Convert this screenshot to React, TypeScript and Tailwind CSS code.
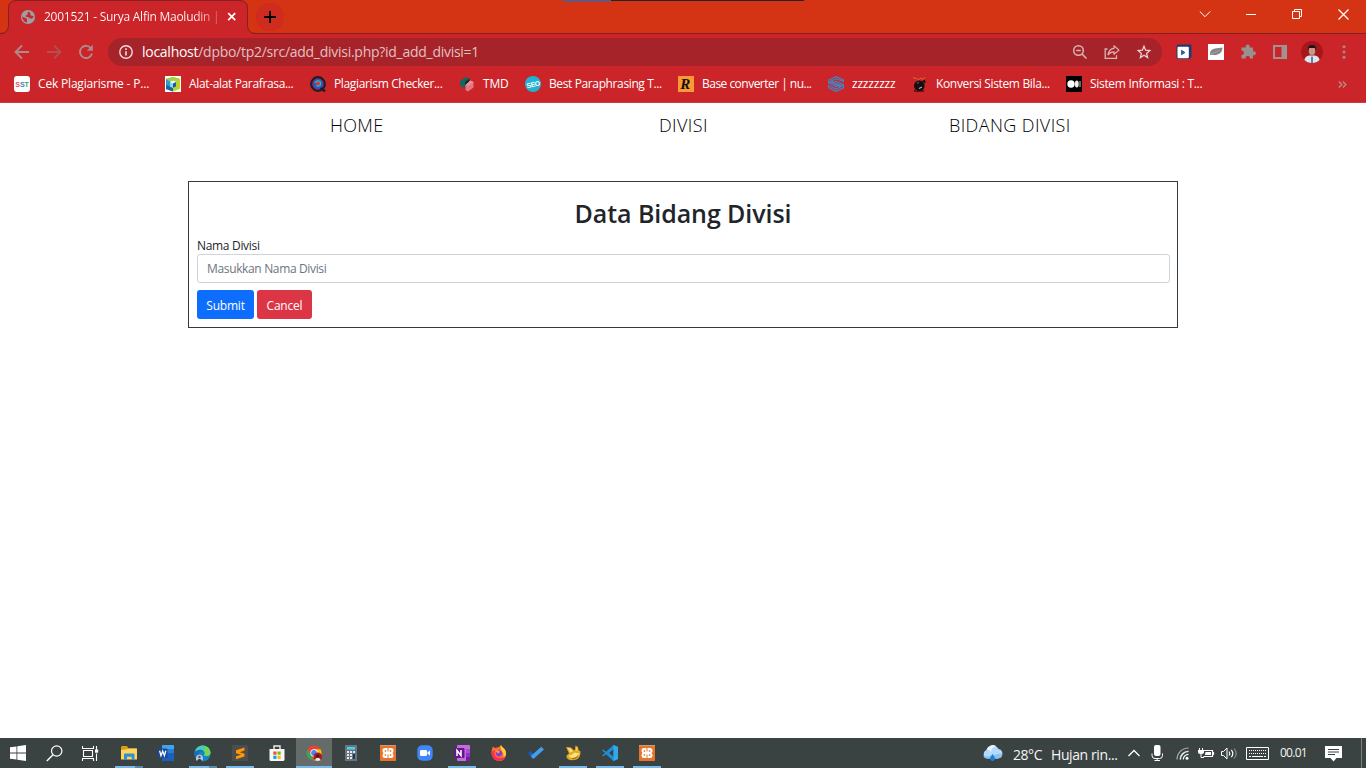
import type { ReactNode } from "react";

type IconProps = { children: ReactNode; s?: number; vb?: string };

function Svg({ children, s = 16, vb }: IconProps) {
  return (
    <svg width={s} height={s} viewBox={vb ?? `0 0 ${s} ${s}`} fill="none" className="block shrink-0">
      {children}
    </svg>
  );
}

/* ---------- bookmark favicons ---------- */
const Sst = () => (
  <Svg>
    <rect width="16" height="16" rx="3" fill="#fff" />
    <text x="1.3" y="10.8" fontSize="7.6" fontWeight="700" fontFamily="Liberation Sans" textLength="13.5" lengthAdjust="spacingAndGlyphs">
      <tspan fill="#e2574c">S</tspan>
      <tspan fill="#3b86c8">S</tspan>
      <tspan fill="#3aa76d">T</tspan>
    </text>
  </Svg>
);
const Cube = () => (
  <Svg>
    <rect width="16" height="16" fill="#fff" />
    <path d="M1 3l7-2v4L5 6v4.500l3 1.500v3.500L1 13z" fill="#2a9fce" />
    <path d="M1 9l4 1.500 3 1.500v3.500L1 13z" fill="#1668a8" />
    <path d="M8 1l7 2v10l-7 2.500V12l3-1.500V6L8 5z" fill="#b9d42c" />
    <path d="M1 3l7-2 7 2-4 2.500L8 4.500l-3 1z" fill="#a9cf3b" />
    <path d="M8 4.500l3 1.200L8 7.500 5 5.700z" fill="#f4fbff" />
    <path d="M5 6l3 1.500V12l-3-1.500z" fill="#8fd0ec" />
    <path d="M8 7.500L11 6v4.500L8 12z" fill="#1b5f8f" />
  </Svg>
);
const Checker = () => (
  <Svg>
    <circle cx="8" cy="8" r="6.800" stroke="#17202d" strokeWidth="2.200" />
    <path d="M10 11l5 4.500" stroke="#17202d" strokeWidth="2.400" />
    <circle cx="8" cy="8" r="4.900" fill="#2354d8" />
    <circle cx="8" cy="7.500" r="2.600" fill="#df3434" stroke="#35b2ad" strokeWidth="1.200" />
    <path d="M5.500 7v5" stroke="#2354d8" strokeWidth="1.500" />
  </Svg>
);
const Tmd = () => (
  <Svg>
    <path d="M1 5l6-4 3.500 1.500L6 6v6.500L1 9.500z" fill="#11695d" />
    <path d="M6 6l4.500-3.500v4L6 9.500z" fill="#0c2e30" />
    <path d="M6.500 9l5-4.500L14.500 6v5.500L9 15.500 6.500 14z" fill="#e87583" />
    <path d="M11.500 4.500L14.500 6 9 10l-2.500-1z" fill="#ef8f9b" />
  </Svg>
);
const Seo = () => (
  <Svg>
    <circle cx="8" cy="8" r="8" fill="#22b2d3" />
    <text x="1.300" y="10.900" fontSize="7" fontWeight="700" fill="#fff" fontFamily="Liberation Sans" textLength="13.500" lengthAdjust="spacingAndGlyphs" transform="rotate(-12 8 8)">
      SEO
    </text>
  </Svg>
);
const RLetter = () => (
  <Svg>
    <rect width="16" height="16" fill="#fb9a32" />
    <text x="2.200" y="13.300" fontSize="15" fontWeight="700" fontStyle="italic" fill="#111" fontFamily="Liberation Serif">
      R
    </text>
  </Svg>
);
const Zed = () => (
  <Svg>
    <path d="M15.500 4L8 .7.700 4v3.200L8 10.500l4.300-1.900M.700 11.800L8 15.300l7.500-3.500V8.700L8 5.300 3.800 7.200M15.500 4v1.500L8 2.800 3 5l12.300 5.500M.700 11.800v-2L8 13l4.700-2.200L.700 5.500" stroke="#3c89d0" strokeWidth="1.150" />
  </Svg>
);
const Bomb = () => (
  <Svg>
    <path d="M2 14.500q5 2.500 10 0" stroke="#5a1518" strokeWidth="1.500" />
    <ellipse cx="7.300" cy="9.800" rx="5.300" ry="5.300" fill="#130f10" />
    <path d="M10.500 5.500l2-.8.300 2.500" stroke="#130f10" strokeWidth="1.500" />
    <path d="M1 1.700l3.500.8L6.500 3.500 9 2l2 1.500L13 1" stroke="#e0692d" />
    <path d="M7 12.500l3-1.500" stroke="#b5b5b5" strokeWidth="1.100" />
    <path d="M5 7.200l2-.7" stroke="#777" />
  </Svg>
);
const Medium = () => (
  <Svg>
    <rect width="16" height="16" fill="#000" />
    <circle cx="5" cy="8" r="3.700" fill="#fff" />
    <ellipse cx="10.800" cy="8" rx="1.900" ry="3.500" fill="#eee" />
    <path d="M14 5v6" stroke="#ccc" />
  </Svg>
);

/* ---------- taskbar app icons ---------- */
const Windows = () => (
  <Svg>
    <path d="M0 2.300l6.500-.9v6.200H0zM7.300 1.300L16 0v7.600H7.300zM0 8.400h6.500v6.200L0 13.700zM7.300 8.400H16V16l-8.700-1.300z" fill="#fff" />
  </Svg>
);
const Search = () => (
  <Svg s={17}>
    <circle cx="10.700" cy="6" r="5.200" stroke="#fff" strokeWidth="1.200" />
    <path d="M7 9.700L.8 16" stroke="#fff" strokeWidth="1.400" />
  </Svg>
);
const TaskView = () => (
  <Svg s={17}>
    <path d="M.5 1v2.500h11V1M.5 16v-2.500h11V16M1.500 5.500v6h9v-6zM14.500 1v4M14.500 8.500V16" stroke="#fff" strokeWidth="1.100" />
    <rect x="13" y="4.500" width="3.200" height="3.200" fill="#fff" />
  </Svg>
);
const Explorer = () => (
  <Svg>
    <path d="M0 2.500Q0 1 1 1h5l1.500 2.500H16v4H0z" fill="#d89c18" />
    <path d="M0 5l6-.7L7.500 3.500H15.500q.5 0 .5 1V14.500H0z" fill="#ffd45c" />
    <path d="M3 15V9.500Q3 8.500 4 8.500h8.500q1 0 1 1V15h-2.800v-3.300H6V15z" fill="#318fd5" />
  </Svg>
);
const Word = () => (
  <Svg>
    <rect x="4" width="12" height="16" rx="1" fill="#41a5ee" />
    <path d="M4 4h12v4H4z" fill="#2b7cd3" />
    <path d="M4 8h12v7q0 1-1 1H5q-1 0-1-1z" fill="#1b5ebd" />
    <rect y="3.500" width="9.500" height="9.500" rx="1" fill="#164a9c" />
    <path d="M1.600 5.800l1.400 4.900 1.700-4.600 1.700 4.600 1.400-4.900" stroke="#fff" strokeWidth="1.300" />
  </Svg>
);
const Edge = () => (
  <Svg s={17}>
    <circle cx="8.500" cy="8.500" r="8" fill="#1386c9" />
    <path d="M.7 7.500C2-1.500 15-2 16.500 7c.5 4.500-5.500 4.800-6.500 3 2-2 0-5-3-5-3.500 0-6 1-6.300 2.500z" fill="#46cdb4" />
    <path d="M11 1.200c4 1.300 6 4.800 5.200 7.800-1 2.500-5 2.300-6.200 1 1.500-1 1-3 0-4z" fill="#71d852" />
    <path d="M.5 7.500c2-3 7-4 9-1-3-1-5 1-4.500 4 .5 3 3 5 6 5C4 18 0 13 .5 7.500z" fill="#176fbd" />
    <path d="M2 14.500q-.5-4.500 3.500-5 4 .5 3.500 5L7.500 17h-4z" fill="#b9c8d4" />
    <circle cx="5.500" cy="12" r="1.200" fill="#5c5552" />
    <path d="M3 17q.2-3 2.500-3T8 17z" fill="#2b3a4c" />
  </Svg>
);
const Sublime = () => (
  <Svg>
    <rect width="16" height="16" rx="1.500" fill="#4d4d4d" />
    <path d="M12.500 2.500L4 5.200v3l5 1.600-5 1.500v3l8.500-2.800V8.700l-4.800-1.500 4.800-1.600z" fill="#ff9800" />
  </Svg>
);
const Store = () => (
  <Svg>
    <path d="M5 4V1h6v3" stroke="#eee" strokeWidth="1.400" />
    <path d="M.5 4h15v10.500q0 1.500-1.500 1.500H2Q.5 16 .5 14.500z" fill="#f7f7f7" />
    <path d="M4.300 6.500h3.200v3.200H4.300z" fill="#f25022" />
    <path d="M8.500 6.500h3.200v3.200H8.500z" fill="#7fba00" />
    <path d="M4.300 10.700h3.200v3.200H4.300z" fill="#00a4ef" />
    <path d="M8.500 10.700h3.200v3.200H8.500z" fill="#ffb900" />
  </Svg>
);
const Chrome = () => (
  <Svg>
    <circle cx="8" cy="8" r="7.500" fill="#ea4335" />
    <path d="M1.500 4.250L4.750 9.880 8 15.500A7.500 7.500 0 0 1 1.500 4.250z" fill="#34a853" />
    <path d="M14.500 4.250H8l3.250 5.630L8 15.500a7.500 7.500 0 0 0 6.500-11.250z" fill="#fbbc05" />
    <circle cx="8" cy="8" r="3.700" fill="#fff" />
    <circle cx="8" cy="8" r="2.900" fill="#4285f4" />
    <circle cx="11.800" cy="11.800" r="4.200" fill="#a61c20" />
    <path d="M9 15.300q.3-2.500 2.800-2.500t2.800 2.500q-2.800 1.200-5.600 0z" fill="#e8ebf0" />
    <circle cx="11.800" cy="11" r="1.500" fill="#3a1b19" />
  </Svg>
);
const Calc = () => (
  <Svg>
    <rect x="2" width="12" height="16" fill="#69747d" />
    <rect x="4" y="2" width="8" height="2.500" fill="#43d3f3" />
    <path d="M4 6h2v2H4zM7 6h2v2H7zM10 6h2v2h-2zM4 9h2v2H4zM7 9h2v2H7zM4 12h2v2H4zM7 12h2v2H7z" fill="#e6e9eb" />
    <path d="M10 9h2v5h-2z" fill="#153a6b" />
  </Svg>
);
const Xampp = () => (
  <Svg>
    <rect width="16" height="16" rx=".7" fill="#e8742a" />
    <path d="M0 0h16v1H0z" fill="#cf9b79" />
    <path d="M5 3h1.500Q7.500 3 8 4q.5-1 1.500-1H11q2.500 0 2.500 2.500Q13.500 7 12.500 8q1 1 1 2.500Q13.500 13 11 13H9.500Q8.500 13 8 12q-.5 1-1.500 1H5q-2.500 0-2.500-2.500Q2.500 9 3.500 8q-1-1-1-2.500Q2.500 3 5 3z" fill="#fff" />
    <path d="M4.700 5.200h1.500v1.500H4.700zM9.800 5.200h1.500v1.500H9.800zM4.700 9.300h1.500v1.500H4.700zM9.800 9.300h1.500v1.500H9.800zM7.500 4h1v2.500h-1zM7.500 9.500h1V12h-1z" fill="#e8742a" />
  </Svg>
);
const Zoom = () => (
  <Svg>
    <rect x=".3" y=".3" width="15.400" height="15.400" rx="5" fill="#4087fc" />
    <rect x="3" y="5" width="7" height="6" rx="1.300" fill="#fff" />
    <path d="M10.500 7.200L13 5.400v5.200l-2.500-1.800z" fill="#fff" />
  </Svg>
);
const OneNote = () => (
  <Svg>
    <rect x="3" width="13" height="16" rx="1" fill="#c56be0" />
    <path d="M12 4h4v4h-4z" fill="#ae4bd5" />
    <path d="M12 8h4v4h-4z" fill="#9332bf" />
    <path d="M12 12h4v3q0 1-1 1h-3z" fill="#7719aa" />
    <rect y="3" width="10.500" height="10" rx="1" fill="#65168d" />
    <path d="M3 11V5.500l4 5V5" stroke="#fff" strokeWidth="1.500" />
  </Svg>
);
const Firefox = () => (
  <Svg>
    <path d="M1 4l1-2.500L4 3l4-1 2-2c.5 2 2.500 2.500 3.500 4l1 1c2 5-1 11-6.500 11S-.8 10 1 4z" fill="#ff6b2f" />
    <path d="M10 0c.5 2 3 2.700 4 5 2.500 5-1 10.500-5 11 4-2 4.500-6 2.500-9C10 5 9 2.500 10 0z" fill="#ffce38" />
    <path d="M.5 8c0 5 4 8 7.500 8 4 0 6-3 6-5-2 2.500-6 3-9 1C3 10.500 3 8 4 5.500 2 5 1 6.500.5 8z" fill="#f62f57" />
    <circle cx="8" cy="8.300" r="3.100" fill="#8042d6" />
    <path d="M4 5.500h3.500L9 7 7 8.500z" fill="#ff9a2d" />
  </Svg>
);
const Todo = () => (
  <Svg>
    <path d="M0 8.500L2.300 6 7 10.500 4.700 13.500z" fill="#185abd" />
    <path d="M4.700 13.500L2.800 11 13.300 1.800 16 4.500 6 13.500q-.7.600-1.300 0z" fill="#419fee" />
  </Svg>
);
const Navicat = () => (
  <Svg>
    <path d="M1 2l5 .5 3 3 1-1L10.500.500l2.500 1.500.5 3 2 1.500c0 4-1 6.500-4 8q-4 1.500-8 0Q1 13 1.500 10.500l2.500-2z" fill="#e4ab1d" />
    <path d="M2.500 3l3 .5L8 6 5.500 7.500zM3.500 10.500q4-.5 6-3 3 1 5 .5-1 4-6 5-3 .5-5-2.500zM11.200 2l1.500 3-1.500.5z" fill="#ffe08a" />
    <path d="M6 13q5 .5 7.500-3.500-.5 4-5 5z" fill="#a87108" />
  </Svg>
);
const VsCode = () => (
  <Svg>
    <path d="M11.500 0L16 2v12l-4.500 2L4 9.300 1.300 11.400 0 10.700 3 8 0 5.300l1.300-.7L4 6.700zM11.500 4.300L7 8l4.500 3.700z" fill="#1f8ed6" fillRule="evenodd" />
    <path d="M11.500 0L16 2v12l-4.500 2z" fill="#32a9ef" />
  </Svg>
);

/* ---------- data ---------- */
const bookmarks = [
  { label: "Cek Plagiarisme - P...", icon: <Sst />, cls: "w-[151px] tracking-[-0.18px]" },
  { label: "Alat-alat Parafrasa...", icon: <Cube />, cls: "w-[145px] tracking-[-0.35px]" },
  { label: "Plagiarism Checker...", icon: <Checker />, cls: "w-[149px] tracking-[-0.35px]" },
  { label: "TMD", icon: <Tmd />, cls: "w-[66px] tracking-[-0.2px]" },
  { label: "Best Paraphrasing T...", icon: <Seo />, cls: "w-[153px] tracking-[-0.38px]" },
  { label: "Base converter | nu...", icon: <RLetter />, cls: "w-[150px] tracking-[-0.52px]" },
  { label: "zzzzzzzz", icon: <Zed />, cls: "w-[84px] tracking-[-0.2px]" },
  { label: "Konversi Sistem Bila...", icon: <Bomb />, cls: "w-[154px] tracking-[-0.35px]" },
  { label: "Sistem Informasi : T...", icon: <Medium />, cls: "w-[150px] tracking-[-0.31px]" },
];

const apps: { name: string; icon: ReactNode; state?: "open" | "multi" | "active" }[] = [
  { name: "explorer", icon: <Explorer />, state: "multi" },
  { name: "word", icon: <Word /> },
  { name: "edge", icon: <Edge />, state: "multi" },
  { name: "sublime", icon: <Sublime />, state: "open" },
  { name: "store", icon: <Store /> },
  { name: "chrome", icon: <Chrome />, state: "active" },
  { name: "calculator", icon: <Calc /> },
  { name: "xampp", icon: <Xampp /> },
  { name: "zoom", icon: <Zoom /> },
  { name: "onenote", icon: <OneNote />, state: "open" },
  { name: "firefox", icon: <Firefox /> },
  { name: "todo", icon: <Todo /> },
  { name: "navicat", icon: <Navicat />, state: "open" },
  { name: "vscode", icon: <VsCode />, state: "open" },
  { name: "xampp-panel", icon: <Xampp />, state: "open" },
];

function TitleBar() {
  return (
    <div className="relative flex h-[34px] shrink-0 border-b border-[#84201f] bg-[#d43413]">
      <div className="absolute left-[563px] top-0 flex h-px w-[241px] bg-[#242424]">
        <div className="w-12 bg-[#0078d7]" />
      </div>
      <div className="relative ml-2 h-[34px] w-60 shrink-0">
        <svg width="256" height="34" viewBox="0 0 256 34" className="absolute -left-2 top-0">
          <path d="M0 34q8 0 8-8V8.500Q8 .5 16 .5h224q8 0 8 8V26q0 8 8 8z" fill="#cb2429" />
          <path d="M0 33.500q8.500 0 8.500-8V8.500q0-8 8-8h223q8 0 8 8v17q0 8 8.500 8" fill="none" stroke="#84201f" />
        </svg>
        <div className="relative flex h-[34px] items-center pl-[13px]">
          <Svg s={14}>
            <circle cx="7" cy="7" r="7" fill="#9aa0a6" />
            <path d="M1 6.500L4.500 8q1.500 0 1.500 1.500v3q-4-.5-5-6zM7.500 1.500Q6 3 6.500 4T4.500 5.500q0 1.500 2 1.500t2 1.500h2.500Q12.500 8 12.500 6q0 0-2.500-.5-1.500-1-.5-2.500z" fill="#cb2429" />
          </Svg>
          <div className="ml-[9px] w-[174px] overflow-hidden whitespace-nowrap bg-linear-to-r from-white from-85% to-[#d9686b] bg-clip-text text-[12px] tracking-[-0.25px] text-transparent">
            2001521 - Surya Alfin Maoludin |
          </div>
          <div className="ml-[9px]">
            <Svg s={10}>
              <path d="M1.200 1.200l7 7M8.200 1.200l-7 7" stroke="#fff" strokeWidth="1.700" />
            </Svg>
          </div>
        </div>
      </div>
      <div className="ml-2 mt-[3px] flex size-7 items-center justify-center rounded-full bg-[#cf2b1f]">
        <Svg s={12}>
          <path d="M6 0v12M0 6h12" stroke="#000" strokeWidth="2" />
        </Svg>
      </div>
      <div className="ml-auto flex h-7 w-[184px] items-center">
        <div className="flex w-[46px] justify-center">
          <Svg s={12}><path d="M.8 3.500L6 8.700l5.200-5.200" stroke="#fff" /></Svg>
        </div>
        <div className="flex w-[46px] justify-center">
          <Svg s={10}><path d="M0 5.500h10" stroke="#fff" /></Svg>
        </div>
        <div className="flex w-[46px] justify-center">
          <Svg s={10}><path d="M.5 2.500h7v7h-7zM2.500 2.500v-2h7v7h-2" stroke="#fff" /></Svg>
        </div>
        <div className="flex w-[46px] justify-center">
          <Svg s={11}><path d="M.5.500l10 10M10.500.500l-10 10" stroke="#fff" strokeWidth="1.200" /></Svg>
        </div>
      </div>
    </div>
  );
}

function Toolbar() {
  return (
    <div className="flex h-9 shrink-0 items-center">
      <div className="flex w-[108px] items-center gap-4 pl-[14px]">
        <Svg>
          <path d="M15 8H2M8 1.500L1.500 8 8 14.500" stroke="#b2898b" strokeWidth="1.800" />
        </Svg>
        <Svg>
          <path d="M1 8h13M8 1.500L14.500 8 8 14.500" stroke="#b2504f" strokeWidth="1.800" />
        </Svg>
        <Svg>
          <path d="M13.300 4.700A6.100 6.100 0 1 0 14 9.500" stroke="#b2898b" strokeWidth="1.900" />
          <path d="M14.800.800v6H8.800z" fill="#b2898b" />
        </Svg>
      </div>
      <div className="flex h-7 w-[1054px] items-center rounded-full bg-[#a6232a] pl-[11px] pr-[10px]">
        <Svg s={14}>
          <circle cx="7" cy="7" r="6.200" stroke="#f0dede" strokeWidth="1.400" />
          <path d="M7 6.200v4.300M7 3.300v1.600" stroke="#f0dede" strokeWidth="1.600" />
        </Svg>
        <div className="ml-[9px] whitespace-nowrap pb-px text-[14px] tracking-[-0.27px] text-[#e2c0c2]">
          <span className="text-white">localhost</span>/dpbo/tp2/src/add_divisi.php?id_add_divisi=1
        </div>
        <div className="ml-auto flex items-center gap-4">
          <Svg>
            <circle cx="6.500" cy="6.500" r="4.800" stroke="#d9b4b5" strokeWidth="1.500" />
            <path d="M4.200 6.500h4.600M10 10l4.500 4.500" stroke="#d9b4b5" strokeWidth="1.500" />
          </Svg>
          <Svg>
            <path d="M3.500 5H1.200v9.300h11.300v-3" stroke="#d9b4b5" strokeWidth="1.300" />
            <path d="M10 1.800l5 4.300-5 4.200V7.800q-3.800 0-6 3Q5 4.700 10 4.300z" stroke="#d9b4b5" strokeWidth="1.200" strokeLinejoin="round" />
          </Svg>
          <Svg>
            <path d="M8 2.300l1.600 3.900 4.200.4-3.200 2.800 1 4.100L8 11.300l-3.600 2.200 1-4.100-3.200-2.800 4.200-.4z" stroke="#ead0d0" strokeWidth="1.300" />
          </Svg>
        </div>
      </div>
      <div className="ml-[14px] flex items-center gap-4">
        <Svg>
          <path d="M3 .500h11.500q1 0 1 1V13l-2 2H2.500q-2 0-2-2V3Q.500.500 3 .500z" fill="#203a72" />
          <rect x="1.500" y="2.700" width="11.300" height="11.500" rx="1" fill="#fff" />
          <path d="M5.500 6.200l3.500 2.300-3.500 2.300z" fill="#1b65c5" stroke="#102e5d" strokeWidth=".6" />
        </Svg>
        <Svg>
          <rect width="16" height="16" fill="#fff" />
          <path d="M2 9.500Q2 5.500 7 4.500L14.500 3.500q0 5.500-5 7-3 1-5 .3L2 11z" fill="#868686" />
          <path d="M3 9.800q4-.8 8.500-3.500" stroke="#a9a9a9" strokeWidth=".8" />
        </Svg>
        <Svg>
          <path d="M1.500 4h4.300a2.100 2.100 0 1 1 3.900 0H13v3.800a2.100 2.100 0 1 1 0 3.900V15H9.700a2 2 0 1 0-3.900 0H1.500v-3.700a2 2 0 1 0 0-3.900z" fill="#999090" transform="translate(0 -.5)" />
        </Svg>
        <Svg>
          <path d="M1 1h14v14H1zM3 3v10h6.500V3z" fill="#a19191" fillRule="evenodd" />
        </Svg>
      </div>
      <div className="ml-[13px]">
        <Svg s={22}>
          <defs>
            <clipPath id="avatar"><circle cx="11" cy="11" r="11" /></clipPath>
          </defs>
          <g clipPath="url(#avatar)">
            <rect width="22" height="22" fill="#a8161b" />
            <path d="M3 22q0-7 5-7.500h6q5 .5 5 7.500z" fill="#d8e5f3" />
            <ellipse cx="11" cy="9.700" rx="3.200" ry="4.500" fill="#c99882" />
            <path d="M7 9.500Q6 4 11 4t4 5.500l-1-2.500H8z" fill="#211618" />
            <path d="M9 14l2 2 2-2v-1H9z" fill="#b98469" />
            <path d="M11 16v6" stroke="#365d8e" strokeWidth="1.500" />
          </g>
        </Svg>
      </div>
      <div className="ml-[13px]">
        <Svg>
          <circle cx="8" cy="2.800" r="1.500" fill="#a98a8b" />
          <circle cx="8" cy="8" r="1.500" fill="#a98a8b" />
          <circle cx="8" cy="13.200" r="1.500" fill="#a98a8b" />
        </Svg>
      </div>
    </div>
  );
}

function Bookmarks() {
  return (
    <div className="flex h-[33px] shrink-0 items-center border-b border-[#c63c48] pb-1 pl-[14px] text-[12px] text-white">
      {bookmarks.map((b) => (
        <div key={b.label} className={`flex shrink-0 items-center gap-2 whitespace-nowrap ${b.cls}`}>
          {b.icon}
          <span>{b.label}</span>
        </div>
      ))}
      <div className="ml-auto mr-[19px]">
        <Svg s={9}>
          <path d="M.8 1.500l3 3-3 3M4.800 1.500l3 3-3 3" stroke="#b98486" strokeWidth="1.500" />
        </Svg>
      </div>
    </div>
  );
}

function Page() {
  return (
    <main className="flex-1 bg-white text-[#212529]">
      <nav className="flex h-[45px] items-center whitespace-nowrap pl-[330px] text-[18px] font-light text-black">
        <a className="w-[329px] tracking-[0.3px]">HOME</a>
        <a className="w-[290px] tracking-[0.4px]">DIVISI</a>
        <a className="tracking-[0.4px]">BIDANG DIVISI</a>
      </nav>
      <section className="mx-auto mt-[33px] flex h-[147px] w-[990px] flex-col border border-[#343a40] px-2">
        <h1 className="mt-[15px] h-[34px] text-center text-[25px] leading-8 font-semibold tracking-[-0.08px]">
          Data Bidang Divisi
        </h1>
        <label className="mt-[6px] h-[17px] text-[12px] leading-[17px] tracking-[-0.32px]">Nama Divisi</label>
        <div className="flex h-[29px] w-[973px] shrink-0 items-center rounded-[3px] border border-[#ced4da] pl-[9px] text-[12px] tracking-[-0.35px] text-[#6c757d]">
          Masukkan Nama Divisi
        </div>
        <div className="mt-[7px] flex gap-[3px] text-[12px] tracking-[-0.2px] text-white">
          <button className="h-[29px] w-[57px] rounded-[3px] bg-[#0d6efd] pt-[3px]">Submit</button>
          <button className="h-[29px] w-[55px] rounded-[3px] bg-[#dc3545] pt-[3px]">Cancel</button>
        </div>
      </section>
    </main>
  );
}

function AppButton({ icon, state }: { icon: ReactNode; state?: "open" | "multi" | "active" }) {
  return (
    <div className="flex w-[37px] justify-center">
      <div className={state === "active" ? "relative flex h-[30px] w-9 items-center justify-center bg-[#646b69]" : "relative flex h-[30px] w-9 items-center justify-center"}>
        {icon}
        {state === "active" && <div className="absolute bottom-0 h-0.5 w-9 bg-[#76b9ed]" />}
        {state === "open" && <div className="absolute bottom-0 h-0.5 w-7 bg-[#76b9ed]" />}
        {state === "multi" && (
          <div className="absolute bottom-0 flex h-0.5 w-7 bg-[#5688ac]">
            <div className="w-5 bg-[#76b9ed]" />
          </div>
        )}
      </div>
    </div>
  );
}

function Taskbar() {
  return (
    <footer className="flex h-[30px] shrink-0 items-center bg-[#3a4341] text-[#f4f5f5]">
      <div className="flex w-9 justify-center"><Windows /></div>
      <div className="flex w-9 justify-center"><Search /></div>
      <div className="flex w-9 justify-center"><TaskView /></div>
      <div className="ml-[2px] flex">
        {apps.map((a) => (
          <AppButton key={a.name} icon={a.icon} state={a.state} />
        ))}
      </div>
      <div className="ml-auto flex h-[30px] w-[384px] items-center">
        <Svg s={21}>
          <path d="M5 15.500a4.500 4.500 0 0 1-.5-8.500A6.500 6.500 0 0 1 16.500 6a4.800 4.800 0 0 1-.5 9.500z" fill="#b4dafa" />
          <path d="M4.500 7A6.500 6.500 0 0 1 14 3Q9 5 9 9 7 6 4.500 7z" fill="#e8f6ff" />
          <path d="M5 15.500a4.500 4.500 0 0 1-4-3q6 2 15-1.500 3-.5 4 0-.5 4-4 4.500z" fill="#8bc2f2" />
          <path d="M10.500 11q3.500 4 2 6-2 2-4 0-1.500-2 2-6z" fill="#207fda" />
        </Svg>
        <div className="ml-[10px] w-[38px] whitespace-nowrap pt-0.5 text-[14px] tracking-[-0.45px]">28°C</div>
        <div className="w-[77px] whitespace-nowrap pt-0.5 text-[14px] tracking-[-0.4px]">Hujan rin...</div>
        <Svg s={12}><path d="M.5 9L6 3.500 11.500 9" stroke="#fff" strokeWidth="1.300" /></Svg>
        <div className="ml-[9px]">
          <Svg>
            <rect x="5" y="0" width="6.500" height="11" rx="2" fill="#fff" />
            <path d="M3 8.500v2q0 3 3 3h4.500q3 0 3-3v-2M8.200 13.500V16M5.500 15.500h5.500" stroke="#fff" />
          </Svg>
        </div>
        <div className="ml-[11px]">
          <Svg s={13}>
            <path d="M1 12.500A11.500 11.500 0 0 1 12.500 1M4 12.500A8.500 8.500 0 0 1 12.500 4" stroke="#a7adab" strokeWidth="1.200" />
            <path d="M4.500 12.500A8 8 0 0 1 12.500 4.500M7.300 12.500a5.200 5.200 0 0 1 5.200-5.200" stroke="#fff" strokeWidth="1.200" />
            <circle cx="11" cy="11.300" r="1.500" fill="#fff" />
          </Svg>
        </div>
        <div className="ml-[9px]">
          <Svg s={17}>
            <path d="M5.500 5.500h9v6h-9M15.500 7v3" stroke="#fff" strokeWidth="1.200" />
            <path d="M7.500 7h5.500v3H7z" fill="#fff" />
            <path d="M1.500 3v2M4.500 3v2M3 8.500v4h3" stroke="#fff" />
            <path d="M0 5h6v2Q6 9 3 9T0 7z" fill="#fff" />
          </Svg>
        </div>
        <div className="ml-[6px]">
          <Svg s={17}>
            <path d="M.5 6.500h2L6 3v11L2.500 10.500h-2z" stroke="#fff" />
            <path d="M8 6.500q1.500 2 0 4M10.300 4.800q3 3.700 0 7.400" stroke="#fff" strokeWidth="1.100" />
            <path d="M13 3.500q4.500 5 0 10" stroke="#8b9290" strokeWidth="1.100" />
          </Svg>
        </div>
        <div className="ml-[8px]">
          <svg width="23" height="13" viewBox="0 0 23 13" fill="none">
            <path d="M.5.500h22v12H.5z" stroke="#fff" />
            <path d="M3 3.500h17M3 6.500h17" stroke="#fff" strokeDasharray="1 1" />
            <path d="M3 9.500h2M6 9.500h11M18 9.500h2" stroke="#fff" />
          </svg>
        </div>
        <div className="ml-[11px] w-[45px] text-[12px] tracking-[-0.75px]">00.01</div>
        <Svg s={17}>
          <path d="M0 1h17v12h-5.500l-3 3.500-3-3.500H0z" fill="#fff" />
          <path d="M3 4.500h11M3 7h11M3 9.500h7" stroke="#3a4341" />
        </Svg>
        <div className="ml-auto mr-1 h-[30px] w-px bg-[#7b8180]" />
      </div>
    </footer>
  );
}

export default function App() {
  return (
    <div className="flex h-[768px] w-[1366px] flex-col overflow-hidden bg-[#cb2429] font-['Open_Sans','Noto_Sans',sans-serif]">
      <TitleBar />
      <Toolbar />
      <Bookmarks />
      <Page />
      <Taskbar />
    </div>
  );
}
